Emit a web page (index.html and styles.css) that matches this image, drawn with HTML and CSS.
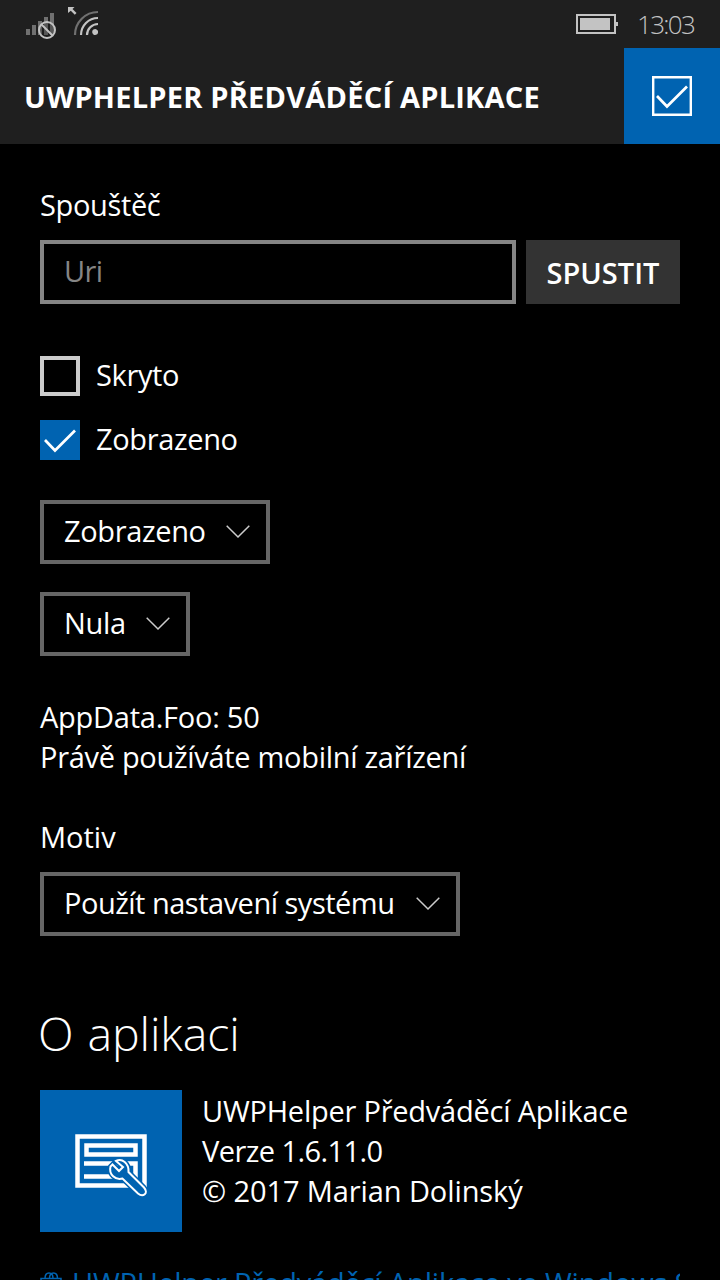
FILE: index.html
```html
<!DOCTYPE html>
<html lang="cs">
<head>
<meta charset="utf-8">
<title>UWPHelper</title>
<link rel="stylesheet" href="styles.css">
</head>
<body>
<div class="phone">
  <div class="status">
    <svg class="signals" width="80" height="40" viewBox="0 0 80 40">
      <g fill="#707070"><path d="M6 29h4v6H6zM12 25h4v10h-4zM18 21h4v14h-4zM24 17h4v18h-4zM30 13h4v22h-4z"/></g>
      <circle cx="27" cy="30" r="8" fill="#1f1f1f" fill-opacity=".3" stroke="#c3c3c3" stroke-width="2"/>
      <path d="M21.500 24.500l11 11" stroke="#c3c3c3" stroke-width="2"/>
      <path d="M48 7h6.500l-2 2 4 4-1.700 1.700-4-4-2.800 2.300z" fill="#c3c3c3"/>
      <g fill="none" stroke="#c3c3c3" stroke-width="2.200">
        <path d="M55 35A23 23 0 0 1 78 12" stroke="#707070"/>
        <path d="M61 35A17 17 0 0 1 78 18"/>
        <path d="M67 35A11 11 0 0 1 78 24"/>
      </g>
      <path d="M78 31v2a3 3 0 1 1 0-2z" fill="#c3c3c3"/>
    </svg>
    <svg class="battery" width="42" height="20" viewBox="0 0 42 20">
      <path d="M1 1h38v18H1z" fill="none" stroke="#c3c3c3" stroke-width="2"/>
      <path d="M4 4h30v12H4zM40 8h2v4h-2z" fill="#c3c3c3"/>
    </svg>
    <span class="clock">13:03</span>
  </div>
  <header class="header">
    <h1 class="title">UWPHELPER PŘEDVÁDĚCÍ APLIKACE</h1>
    <button class="header-button" aria-label="Zobrazeno">
      <svg width="40" height="40" viewBox="0 0 40 40" fill="none" stroke="#fff"><path d="M1.200 1.200h37.600v37.600H1.200z" stroke-width="2.400"/><path d="M5 20l10 10.500L35 10.500" stroke-width="2.700"/></svg>
    </button>
  </header>
  <main class="content">
    <div class="label trigger-label"><span class="t-trigger">Spouštěč</span></div>
    <div class="trigger">
      <div class="input">Uri</div>
      <button class="run">SPUSTIT</button>
    </div>
    <div class="check first"><span class="box"></span><span class="t-hidden">Skryto</span></div>
    <div class="check second">
      <span class="box checked"><svg width="40" height="40" viewBox="0 0 40 40" fill="none" stroke="#fff" stroke-width="2.700"><path d="M5 20l10 10.500L35 10.500"/></svg></span>
      <span class="t-shown">Zobrazeno</span>
    </div>
    <div class="combo combo-shown"><span class="t-shown">Zobrazeno</span><svg class="chevron" width="24" height="14" viewBox="0 0 24 14"><path d="M.7.700L12 12 23.300.700"/></svg></div>
    <div class="combo combo-zero"><span class="t-zero">Nula</span><svg class="chevron" width="24" height="14" viewBox="0 0 24 14"><path d="M.7.700L12 12 23.300.700"/></svg></div>
    <div class="info"><div class="t-foo">AppData.Foo: 50</div><div class="t-device">Právě používáte mobilní zařízení</div></div>
    <div class="label theme-label"><span class="t-theme">Motiv</span></div>
    <div class="combo combo-theme"><span class="t-system">Použít nastavení systému</span><svg class="chevron" width="24" height="14" viewBox="0 0 24 14"><path d="M.7.700L12 12 23.300.700"/></svg></div>
    <h2 class="heading">O aplikaci</h2>
    <section class="about">
      <div class="tile">
        <svg width="72" height="64" viewBox="0 0 72 64" fill="none" stroke="#fff">
          <path d="M2.500 2.500h67v49h-67z" stroke-width="4.500"/>
          <path d="M11.500 11.500h49v9h-49z" stroke-width="4.500"/>
          <path d="M9 29.500h51.500v13H9" stroke-width="4.500"/>
          <path d="M37.500 30.500l6.500 6.500 4-4-7-6c6-3 13 2 12.500 11l15.500 15.500c5 6-1 10-6 6L47.500 44.500c-7 2-14-4-12-12z" fill="#0063b1" stroke="#0063b1" stroke-width="5"/>
          <path d="M37.500 30.500l6.500 6.500 4-4-7-6c6-3 13 2 12.500 11l15.500 15.500c5 6-1 10-6 6L47.500 44.500c-7 2-14-4-12-12z" fill="#0063b1" stroke-width="2"/>
        </svg>
      </div>
      <div class="about-text"><div class="t-name">UWPHelper Předváděcí Aplikace</div><div class="t-version">Verze 1.6.11.0</div><div class="t-author">© 2017 Marian Dolinský</div></div>
    </section>
    <div class="link">
      <svg class="bag" width="22" height="24" viewBox="0 0 22 24" fill="none" stroke="#0063b1" stroke-width="1.500"><path d="M1 7.500h20v14H1zM5 7.500c0-7.500 8-7.500 8 0M9.500 7.500c0-7.500 8-7.500 8 0"/></svg>
      <span class="t-link">UWPHelper Předváděcí Aplikace ve Windows Storu</span>
    </div>
  </main>
</div>
</body>
</html>
```
FILE: styles.css
```css
* { box-sizing: border-box; }
body { margin: 0; background: #000; color: #fff; font: 29px/40px "Open Sans", "Noto Sans", sans-serif; }
.phone { height: 1280px; width: 720px; overflow: hidden; }
.status { height: 48px; background: #1f1f1f; display: flex; align-items: flex-start; color: #c3c3c3; }
.signals { margin-left: 20px; }
.battery { margin: 14px 0 0 476px; }
.clock { margin: 4px 0 0 19px; font-size: 26px; font-weight: 350; letter-spacing: -1.7px; white-space: nowrap; }
.header { height: 96px; background: #1f1f1f; display: flex; justify-content: space-between; }
.title { margin: 29px 0 0 24px; font-size: 29px; line-height: 40px; font-weight: 700; letter-spacing: .22px; white-space: nowrap; }
.header-button { width: 96px; height: 96px; border: 0; padding: 0; background: #0063b1; display: flex; align-items: center; justify-content: center; }
.content { padding: 0 40px; white-space: nowrap; }
.trigger-label { margin-top: 41px; }
.t-trigger, .t-hidden, .t-shown { letter-spacing: -.35px; }
.t-zero, .t-device { letter-spacing: -.3px; }
.t-foo { letter-spacing: -.25px; }
.t-system { letter-spacing: -.5px; }
.t-name { letter-spacing: -.23px; }
.t-version { letter-spacing: -.57px; }
.t-author { letter-spacing: -.1px; }
.t-link { letter-spacing: -.17px; }
.trigger { display: flex; gap: 10px; margin-top: 15px; }
.input { width: 476px; height: 64px; border: 4px solid #858585; padding: 7px 20px; color: #858585; letter-spacing: -.6px; }
.run { width: 154px; height: 64px; border: 0; padding: 2px 0 0; background: #333; color: #fff; font: 600 29px/40px "Open Sans", "Noto Sans", sans-serif; }
.check { display: flex; gap: 16px; height: 40px; }
.check > span:last-child { margin-top: -1px; }
.first { margin-top: 52px; }
.second { margin-top: 24px; }
.box { width: 40px; height: 40px; border: 4px solid #ccc; }
.checked { border: 0; background: #0063b1; }
.box svg { display: block; }
.combo { height: 64px; border: 4px solid #666; display: flex; justify-content: space-between; padding: 7px 16px 0 20px; }
.combo-shown { width: 230px; margin-top: 40px; }
.combo-zero { width: 150px; margin-top: 28px; }
.combo-theme { width: 420px; margin-top: 15px; }
.chevron { margin-top: 14px; fill: none; stroke: #ccc; stroke-width: 1.5; }
.info { margin-top: 41px; }
.theme-label { margin-top: 40px; }
.heading { margin: 67px 0 0 -2px; font-size: 46.5px; line-height: 60px; font-weight: 350; word-spacing: 2px; letter-spacing: -.1px; }
.about { display: flex; gap: 20px; margin-top: 27px; }
.tile { width: 142px; height: 142px; background: #0063b1; padding: 44px 0 0 35px; }
.about-text { margin-top: 1px; }
.link { display: flex; gap: 10px; margin-top: 31px; color: #0063b1; overflow: hidden; }
.bag { margin-top: 8px; flex: none; }
```
